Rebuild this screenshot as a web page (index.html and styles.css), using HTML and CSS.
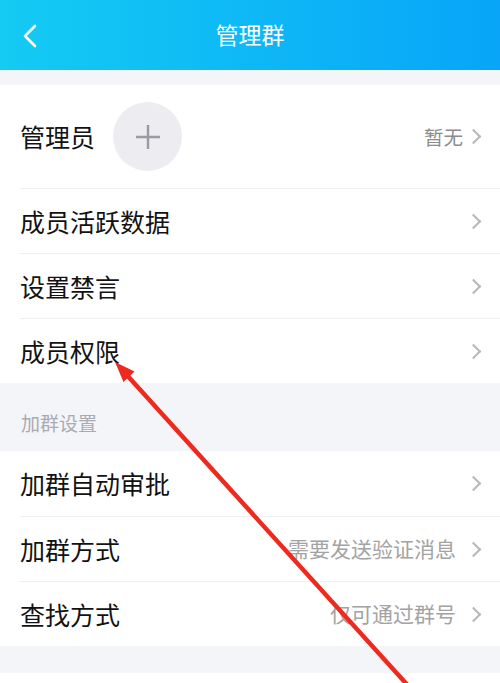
FILE: index.html
```html
<!DOCTYPE html>
<html>

<head>
  <meta charset="utf-8">
  <title>管理群</title>
  <link rel="stylesheet" href="styles.css">
</head>

<body>
  <div class="page">
    <div class="header">
      <svg class="back" width="16" height="24" viewBox="0 0 16 24">
        <path d="M13 2 L3 12 L13 22" fill="none" stroke="#fff" stroke-width="2.6" stroke-linecap="round" stroke-linejoin="round"/>
      </svg>
      <div class="title">管理群</div>
    </div>

    <div class="gap"></div>

    <div class="group">
      <div class="row tall">
        <span class="label">管理员</span>
        <span class="add">
          <svg width="26" height="26" viewBox="0 0 26 26">
            <path d="M13 1 V25 M1 13 H25" stroke="#9a9aa0" stroke-width="2.4"/>
          </svg>
        </span>
        <span class="value short">暂无</span>
        <span class="more"></span>
      </div>
      <div class="row">
        <span class="label">成员活跃数据</span>
        <span class="value"></span>
        <span class="more"></span>
      </div>
      <div class="row">
        <span class="label">设置禁言</span>
        <span class="value"></span>
        <span class="more"></span>
      </div>
      <div class="row">
        <span class="label">成员权限</span>
        <span class="value"></span>
        <span class="more"></span>
      </div>
    </div>

    <div class="section">加群设置</div>

    <div class="group">
      <div class="row">
        <span class="label">加群自动审批</span>
        <span class="value"></span>
        <span class="more"></span>
      </div>
      <div class="row">
        <span class="label">加群方式</span>
        <span class="value">需要发送验证消息</span>
        <span class="more"></span>
      </div>
      <div class="row">
        <span class="label">查找方式</span>
        <span class="value">仅可通过群号</span>
        <span class="more"></span>
      </div>
    </div>

    <div class="gap bottom"></div>
    <div class="group filler"></div>

    <!-- red annotation arrow drawn over the page -->
    <svg class="arrow" width="500" height="683" viewBox="0 0 500 683">
      <path d="M125 373 L412 690" stroke="#ee2a1f" stroke-width="4.5" stroke-linecap="round"/>
      <polygon points="115,362 134.5,371.5 123.5,382" fill="#ee2a1f"/>
    </svg>
  </div>
</body>

</html>
```

FILE: styles.css
```css
body {
  margin: 0;
  font-family: "Noto Sans CJK SC", "Noto Sans", sans-serif;
  background-color: #ffffff;
}

.page {
  position: relative;
  width: 500px;
  height: 683px;
  overflow: hidden;
}

.header {
  height: 70px;
  display: flex;
  align-items: center;
  justify-content: center;
  position: relative;
  background: linear-gradient(to right, #14cbf3, #08a5f8);
}

.header .back {
  position: absolute;
  left: 22px;
  top: 24px;
}

.header .title {
  color: #ffffff;
  font-size: 23px;
  margin-top: -2px;
}

.gap {
  height: 15px;
  background-color: #f4f5f9;
}

.gap.bottom {
  height: 27px;
}

.group {
  background-color: #ffffff;
}

.group.filler {
  height: 20px;
}

.row {
  height: 64px;
  margin-left: 20px;
  padding-right: 17px;
  display: flex;
  align-items: center;
  border-top: 1px solid #efeff2;
}

.row:first-child {
  border-top: none;
  height: 65px;
}

.row.tall {
  height: 103px;
}

.row .label {
  font-size: 25px;
  color: #121212;
  margin-top: -1px;
}

.row .add {
  width: 69px;
  height: 69px;
  margin-left: 18px;
  border-radius: 50%;
  background-color: #ececf1;
  display: flex;
  align-items: center;
  justify-content: center;
}

.row .value {
  flex: 1;
  text-align: right;
  font-size: 21px;
  color: #a3a3a3;
  margin-top: -3px;
}

.row .value.short {
  font-size: 19.5px;
  color: #8c8c8c;
  margin-right: -7px;
  margin-top: -1px;
}

.row .more {
  width: 9px;
  height: 9px;
  margin-left: 12px;
  margin-right: 4px;
  border-top: 2px solid #b8b8bc;
  border-right: 2px solid #b8b8bc;
  transform: rotate(45deg);
}

.section {
  height: 68px;
  background-color: #f4f5f9;
  padding-left: 21px;
  box-sizing: border-box;
  padding-top: 26px;
  font-size: 19px;
  line-height: 28px;
  color: #a9abb0;
}

.arrow {
  position: absolute;
  left: 0;
  top: 0;
}
```
